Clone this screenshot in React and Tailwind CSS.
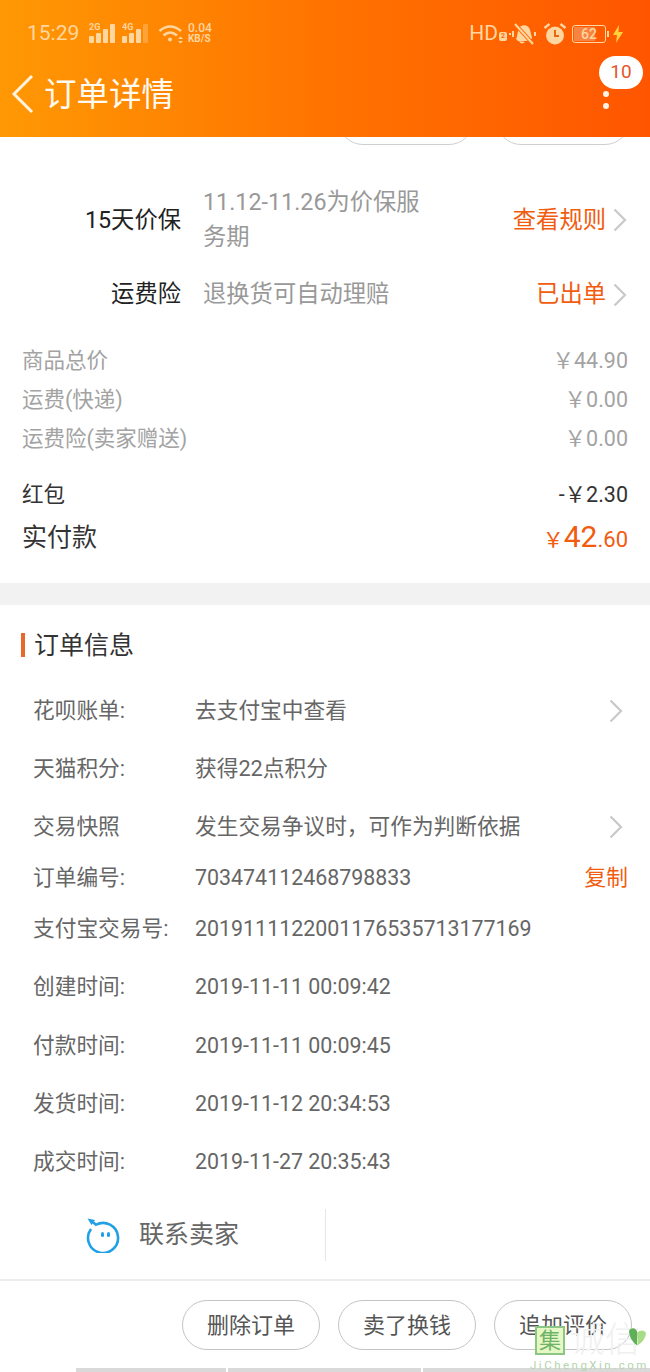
import React from "react";

const Chevron = ({ className = "" }) => (
  <svg width="14" height="24" viewBox="0 0 14 24" fill="none" stroke="#c9c9c9" strokeWidth="2.200" className={className}>
    <path d="M1.500 1.500L12 12L1.500 22.500" />
  </svg>
);

const CostRow = ({ label, value }) => (
  <div className="flex h-[39px] items-center justify-between">
    <span>{label}</span>
    <span>{value}</span>
  </div>
);

const InfoRow = ({ label, value, h, arrow, copy, mono }) => (
  <div className={`flex items-center pl-[33px] pr-[22px] ${h}`}>
    <span className="w-[162px] shrink-0 text-[#666666]">{label}</span>
    <span className={`flex-1 text-[#666666] ${mono ? "text-[21.4px]" : ""}`}>{value}</span>
    {arrow && <Chevron className="mr-[5px]" />}
    {copy && <span className="text-[#f25c0f]">复制</span>}
  </div>
);

const PillButton = ({ children }) => (
  <div className="flex h-[50px] w-[138px] items-center justify-center rounded-[25px] border border-[#c4c4c4] text-[22px] text-[#555555]">
    {children}
  </div>
);

const Signal = ({ tag, last }) => (
  <div className="relative h-[20px] w-[29px]">
    <span className="absolute left-[1px] top-[-2px] text-[9px] font-bold leading-[10px] text-[#ffd6a0]">{tag}</span>
    <svg width="29" height="20" viewBox="0 0 29 20" className="absolute left-0 top-0" fill="#ffd6a0">
      <rect x="1" y="12" width="5" height="7" rx="1" />
      <rect x="8" y="9" width="5" height="10" rx="1" />
      <rect x="15" y="5" width="5" height="14" rx="1" />
      <rect x="22" y="0" width="5" height="19" rx="1" opacity={last ? 0.35 : 1} />
    </svg>
  </div>
);

const StatusBar = () => (
  <div className="flex h-[66px] items-center pl-[27px] pr-[26px] pt-[1px] text-[#ffd6a0]">
    <span className="w-[53px] text-[21px] leading-none">15:29</span>
    <div className="ml-[8px] flex gap-[4px]">
      <Signal tag="2G" />
      <Signal tag="4G" last />
    </div>
    <svg width="27" height="20" viewBox="0 0 27 20" fill="none" stroke="#ffd6a0" strokeWidth="2.600" className="ml-[8px]">
      <path d="M1.500 7 Q12 -2 23 7" />
      <path d="M5.500 11.500 Q12 5.500 19 11.500" />
      <circle cx="12" cy="15.500" r="2" fill="#ffd6a0" stroke="none" />
      <path d="M20 15l2.500-2.500 2.500 2.500zM20 17l2.500 2.500 2.500-2.500z" fill="#ffd6a0" stroke="none" />
    </svg>
    <div className="ml-[3px] flex flex-col text-[10px] font-bold leading-[10px]">
      <span className="text-[12px] font-medium leading-[11px]">0.04</span>
      <span>KB/S</span>
    </div>
    <div className="flex-1" />
    <span className="text-[21px] leading-none">HD</span>
    <span className="ml-[1px] mt-[6px] flex h-[9px] w-[8px] items-center justify-center rounded-[2px] bg-[#ffd6a0] text-[7px] font-bold leading-none text-[#ff6a00]">2</span>
    <svg width="28" height="26" viewBox="0 0 28 26" fill="none" className="ml-[2px]">
      <path d="M7 18c2-3 1-10 5-13 4-2 8 0 9 4l2 8-2 3H9z" fill="#ffd6a0" />
      <path d="M10 20c1 3 4 3 6 1z" fill="#ffd6a0" />
      <path d="M6 3l18 20" stroke="#ff6a00" strokeWidth="4" />
      <path d="M6 3l18 20" stroke="#ffd6a0" strokeWidth="2" />
      <path d="M4 10v6M1 12v2M26 11v4" stroke="#ffd6a0" strokeWidth="2" />
    </svg>
    <svg width="24" height="24" viewBox="0 0 24 24" className="ml-[6px]">
      <circle cx="12" cy="13.500" r="9" fill="#ffd6a0" />
      <path d="M12 8v6h4" stroke="#e86a10" strokeWidth="2" fill="none" />
      <path d="M1.500 6l5-4M22.500 6l-5-4" stroke="#ffd6a0" strokeWidth="2.400" />
    </svg>
    <div className="relative ml-[5px] h-[18px] w-[34px] rounded-[3px] border border-[#ffd6a0] p-[1px]">
      <div className="flex h-full w-[21px] items-center bg-[#f8823f]" />
      <span className="absolute inset-0 flex items-center justify-center text-[14px] font-medium leading-none">62</span>
      <span className="absolute right-[-4px] top-[5px] h-[6px] w-[2px] bg-[#ffd6a0]" />
    </div>
    <svg width="12" height="18" viewBox="0 0 12 18" fill="#ffd23c" className="ml-[6px]">
      <path d="M7 0L1 10h4l-1 8 7-11H6.500z" />
    </svg>
  </div>
);

export default function App() {
  return (
    <div
      className="relative flex h-[1372px] w-[650px] flex-col overflow-hidden bg-white"
      style={{ fontFamily: 'Roboto, "Noto Sans CJK SC", sans-serif' }}
    >
      {/* header */}
      <div className="h-[137px] shrink-0 bg-gradient-to-r from-[#ff9804] via-[#ff7300] to-[#ff5500]">
        <StatusBar />
        <div className="flex h-[71px] items-start">
          <svg width="24" height="40" viewBox="0 0 24 40" fill="none" stroke="#fff3e0" strokeWidth="3" className="ml-[11px] mt-[8px]">
            <path d="M21 2L3 20L21 38" />
          </svg>
          <span className="ml-[9px] mt-[6px] text-[32.500px] leading-[46px] text-[#fffaf2]">订单详情</span>
          <div className="flex-1" />
          <div className="relative mr-[7px] mt-[-10px] flex w-[44px] flex-col items-center">
            <div className="flex h-[33px] w-[44px] items-center justify-center rounded-[17px] bg-white text-[19px] text-[#e4552a]">10</div>
            <span className="mt-[2px] h-[6px] w-[6px] translate-x-[-15px] rounded-full bg-[#fff3e6]" />
            <span className="mt-[6px] h-[6px] w-[6px] translate-x-[-15px] rounded-full bg-[#fff3e6]" />
          </div>
        </div>
      </div>

      {/* bottoms of the buttons scrolled under the header */}
      <div className="flex h-[9px] shrink-0 justify-end gap-[22px] overflow-hidden pr-[20px]">
        <div className="mt-[-42px] h-[50px] w-[136px] rounded-[25px] border border-[#cfcfcf]" />
        <div className="mt-[-42px] h-[50px] w-[134px] rounded-[25px] border border-[#cfcfcf]" />
      </div>

      {/* service rows */}
      <div className="mt-[39px] flex h-[70px] shrink-0 items-center text-[23.300px]">
        <span className="w-[181px] text-right text-[#222222]">15天价保</span>
        <span className="ml-[22px] w-[225px] leading-[35px] text-[#999999]">11.12-11.26为价保服务期</span>
        <span className="ml-auto text-[#f25c0f]">查看规则</span>
        <Chevron className="ml-[7px] mr-[23px]" />
      </div>
      <div className="mt-[22px] flex h-[35px] shrink-0 items-center text-[23.300px]">
        <span className="w-[181px] text-right text-[#222222]">运费险</span>
        <span className="ml-[22px] text-[#999999]">退换货可自动理赔</span>
        <span className="ml-auto text-[#f25c0f]">已出单</span>
        <Chevron className="ml-[7px] mr-[23px]" />
      </div>

      {/* costs */}
      <div className="mt-[30px] shrink-0 px-[22px] text-[21.500px] text-[#a3a3a3]">
        <CostRow label="商品总价" value="￥44.90" />
        <CostRow label="运费(快递)" value="￥0.00" />
        <CostRow label="运费险(卖家赠送)" value="￥0.00" />
      </div>
      <div className="mt-[17px] flex h-[39px] shrink-0 items-center justify-between px-[22px] text-[21.500px] text-[#333333]">
        <span>红包</span>
        <span>-￥2.30</span>
      </div>
      <div className="flex h-[45px] shrink-0 items-center justify-between px-[22px] text-[#f25c0f]">
        <span className="text-[25px] text-[#333333]">实付款</span>
        <span className="mb-[3px] flex items-baseline">
          <span className="text-[21px]">￥</span>
          <span className="text-[30px]">42</span>
          <span className="text-[22px]">.60</span>
        </span>
      </div>
      <div className="mt-[23px] h-[22px] shrink-0 bg-[#f2f2f2]" />

      {/* order info */}
      <div className="ml-[21px] mt-[28px] flex h-[24px] shrink-0 items-center border-l-[4px] border-[#e8672a] pl-[9px] pt-[2px] text-[25px] text-[#333333]">
        订单信息
      </div>
      <div className="mt-[25px] shrink-0 text-[21.700px]">
        <InfoRow h="h-[58px]" label="花呗账单:" value="去支付宝中查看" arrow />
        <InfoRow h="h-[58px]" label="天猫积分:" value="获得22点积分" />
        <InfoRow h="h-[58px]" label="交易快照" value="发生交易争议时，可作为判断依据" arrow />
        <InfoRow h="h-[44px]" label="订单编号:" value="703474112468798833" mono copy />
        <InfoRow h="h-[58px]" label="支付宝交易号:" value="2019111122001176535713177169" mono />
        <InfoRow h="h-[58px]" label="创建时间:" value="2019-11-11 00:09:42" mono />
        <InfoRow h="mt-[1px] h-[58px]" label="付款时间:" value="2019-11-11 00:09:45" mono />
        <InfoRow h="h-[58px]" label="发货时间:" value="2019-11-12 20:34:53" mono />
        <InfoRow h="h-[58px]" label="成交时间:" value="2019-11-27 20:35:43" mono />
      </div>

      {/* contact seller */}
      <div className="mt-[18px] flex h-[52px] shrink-0">
        <div className="flex w-[326px] items-center border-r border-[#e6e6e6] pl-[86px]">
          <svg width="36" height="36" viewBox="0 0 36 36" fill="none">
            <path d="M6 4.500l4 3.200A15 15 0 1 1 5 12" stroke="#22a0e6" strokeWidth="2.600" />
            <path d="M1.500 1.500l7.500 1.500-3.500 5z" fill="#22a0e6" />
            <rect x="15" y="15" width="3" height="5" rx="1.500" fill="#22a0e6" />
            <rect x="21" y="15" width="3" height="5" rx="1.500" fill="#22a0e6" />
          </svg>
          <span className="ml-[17px] text-[25px] text-[#666666]">联系卖家</span>
        </div>
      </div>
      <div className="mt-[18px] h-[2px] shrink-0 bg-[#ececec]" />

      {/* actions */}
      <div className="mt-[19px] flex shrink-0 justify-end gap-[18px] pr-[18px]">
        <PillButton>删除订单</PillButton>
        <PillButton>卖了换钱</PillButton>
        <PillButton>追加评价</PillButton>
      </div>
      <div className="ml-[76px] mt-[18px] flex h-[4px] shrink-0 gap-[2px]">
        <div className="w-[151px] bg-[#d9d9d9]" />
        <div className="w-[193px] bg-[#d9d9d9]" />
        <div className="w-[228px] bg-[#d9d9d9]" />
      </div>

      {/* watermark */}
      <div className="absolute left-[530px] top-[1326px] w-[120px]">
        <div className="flex items-center pl-[5px]">
          <div className="flex h-[29px] w-[30px] items-center justify-center border-2 border-[#8cc684] bg-[#e4f7c4] text-[22px] leading-none text-[#6fb268]">集</div>
          <span className="ml-[5px] text-[35px] font-light leading-[29px] text-[#f0f0f0]">诚信</span>
        </div>
        <svg width="19" height="20" viewBox="0 0 18 18" className="absolute left-[98px] top-[1px]">
          <path d="M1 3c3-4 7-2 8 2 0 5-1 9 0 12C5 15 1 9 1 3z" fill="#5fae58" />
          <path d="M9 5c2-3 6-3 8 0 0 6-5 10-8 12z" fill="#a9dc86" />
        </svg>
        <div className="mt-[5px] whitespace-nowrap text-[11.500px] leading-[11px] tracking-[2.500px] text-[#b4d4ac]">JiChengXin.com</div>
      </div>
    </div>
  );
}
